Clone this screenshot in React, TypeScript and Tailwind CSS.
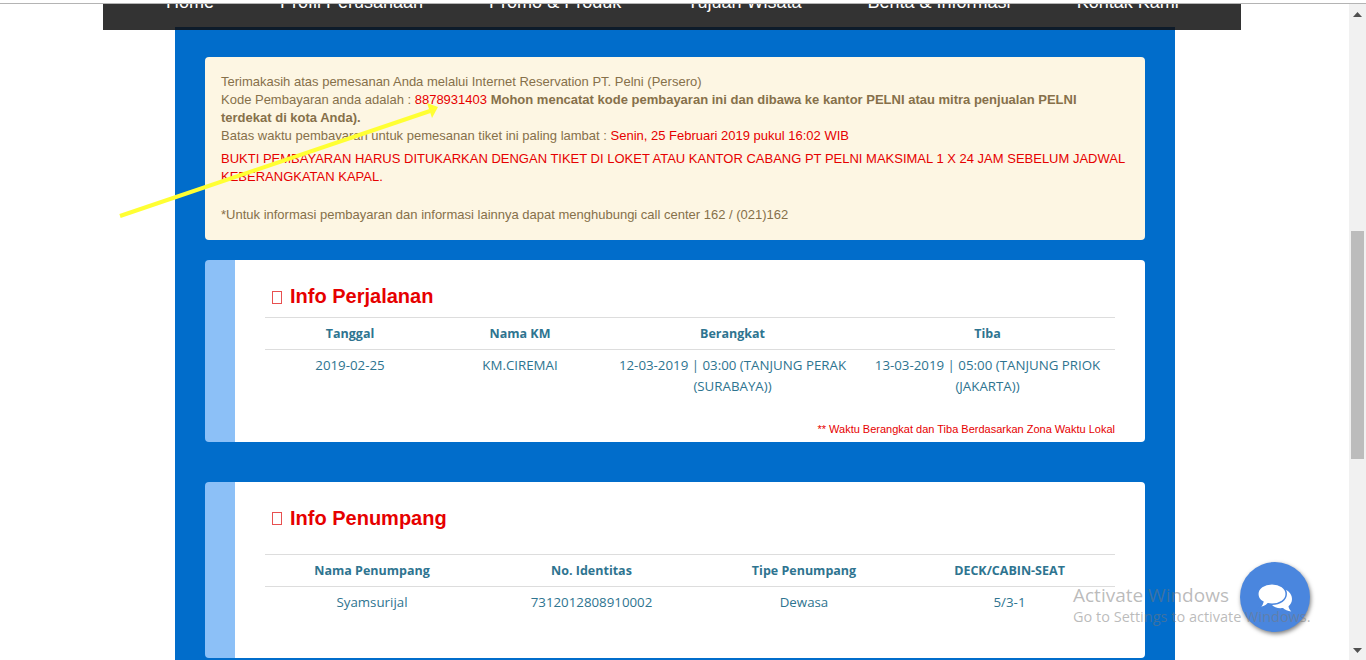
import React from "react";

const Head = ({ children }: { children: React.ReactNode }) => (
  <div className="text-center text-[12.5px] font-bold leading-[21px] text-[#2e7490]">{children}</div>
);
const Cell = ({ children, className = "" }: { children: React.ReactNode; className?: string }) => (
  <div className={`text-center text-[13.3px] leading-[21px] text-[#2e7490] ${className}`}>{children}</div>
);

export default function App() {
  const nav = ["Home", "Profil Perusahaan", "Promo & Produk", "Tujuan Wisata", "Berita & Informasi", "Kontak Kami"];
  return (
    <div className="relative h-[660px] w-[1366px] overflow-hidden bg-white font-['Liberation_Sans',Arial,sans-serif]">
      <div className="h-[3px]" />
      <div className="h-px bg-[#b4b4b4]" />
      <div className="w-[1349px]">
        <div className="ml-[103px] h-[26px] w-[1138px] overflow-hidden bg-[#333333]">
          <div className="mt-[-12px] flex gap-[66px] pl-[63px] text-[18px] leading-[20px] text-white">
            {nav.map((n) => <span key={n} className="whitespace-nowrap">{n}</span>)}
          </div>
        </div>
        <div className="mx-[175px] mt-[-3px] h-[633px] w-[1000px] border-t-[3px] border-[#0d1b2a] bg-[#016dcb] px-[30px] pt-[27px]">
          <div className="h-[183px] rounded-[4px] bg-[#fdf6e3] px-[16px] pt-[16px] text-[13px] leading-[18px] text-[#86704a]">
            <div>Terimakasih atas pemesanan Anda melalui Internet Reservation PT. Pelni (Persero)</div>
            <div>Kode Pembayaran anda adalah : <span className="text-[#e60000]">8878931403</span> <b>Mohon mencatat kode pembayaran ini dan dibawa ke kantor PELNI atau mitra penjualan PELNI terdekat di kota Anda).</b></div>
            <div>Batas waktu pembayaran untuk pemesanan tiket ini paling lambat : <span className="text-[#e60000]">Senin, 25 Februari 2019 pukul 16:02 WIB</span></div>
            <div className="mt-[5px] text-[#e60000]">BUKTI PEMBAYARAN HARUS DITUKARKAN DENGAN TIKET DI LOKET ATAU KANTOR CABANG PT PELNI MAKSIMAL 1 X 24 JAM SEBELUM JADWAL KEBERANGKATAN KAPAL.</div>
            <div className="mt-[20px]">*Untuk informasi pembayaran dan informasi lainnya dapat menghubungi call center 162 / (021)162</div>
          </div>

          <section className="mt-[20px] h-[182px] overflow-hidden rounded-[4px] border-l-[30px] border-[#8cc0f7] bg-white px-[30px]">
            <h2 className="flex h-[57px] items-end pb-[9px] pl-[7px] text-[20px] font-bold leading-[24px] text-[#e60000]">
              <span className="mr-[8px] mb-[4px] inline-block h-[13px] w-[10px] border border-[#e85050]" />Info Perjalanan
            </h2>
            <div className="font-['Open_Sans',sans-serif]">
              <div className="grid h-[33px] grid-cols-[170px_170px_255px_255px] items-center border-y border-[#dddddd]">
                <Head>Tanggal</Head><Head>Nama KM</Head><Head>Berangkat</Head><Head>Tiba</Head>
              </div>
              <div className="grid grid-cols-[170px_170px_255px_255px] pt-[5px]">
                <Cell>2019-02-25</Cell><Cell>KM.CIREMAI</Cell>
                <Cell className="px-[10px]">12-03-2019 | 03:00 (TANJUNG PERAK (SURABAYA))</Cell>
                <Cell className="px-[10px]">13-03-2019 | 05:00 (TANJUNG PRIOK (JAKARTA))</Cell>
              </div>
            </div>
            <div className="mt-[25px] text-right text-[11px] leading-[14px] text-[#e60000]">** Waktu Berangkat dan Tiba Berdasarkan Zona Waktu Lokal</div>
          </section>

          <section className="mt-[40px] h-[176px] overflow-hidden rounded-[4px] border-l-[30px] border-[#8cc0f7] bg-white px-[30px]">
            <h2 className="flex h-[72px] items-start pt-[24px] pl-[7px] text-[20px] font-bold leading-[24px] text-[#e60000]">
              <span className="mr-[8px] mt-[6px] inline-block h-[13px] w-[10px] border border-[#e85050]" />Info Penumpang
            </h2>
            <div className="font-['Open_Sans',sans-serif]">
              <div className="grid h-[33px] grid-cols-[214px_225px_200px_211px] items-center border-y border-[#dddddd]">
                <Head>Nama Penumpang</Head><Head>No. Identitas</Head><Head>Tipe Penumpang</Head><Head>DECK/CABIN-SEAT</Head>
              </div>
              <div className="grid grid-cols-[214px_225px_200px_211px] pt-[5px]">
                <Cell>Syamsurijal</Cell><Cell>7312012808910002</Cell><Cell>Dewasa</Cell><Cell>5/3-1</Cell>
              </div>
            </div>
          </section>
        </div>
      </div>

      {/* annotation arrow */}
      <svg className="absolute left-0 top-0" width="1366" height="660">
        <line x1="120" y1="216" x2="430" y2="111" stroke="#ffff33" strokeWidth="4" />
        <polygon points="438,107 427,103 432,118" fill="#ffff33" />
      </svg>

      {/* browser scrollbar */}
      <div className="absolute right-0 top-[4px] h-[656px] w-[17px] bg-[#f1f1f1]">
        <svg className="absolute left-[4px] top-[8px]" width="9" height="6"><polygon points="4.5,0 9,5 0,5" fill="#505050" /></svg>
        <div className="absolute left-[2px] top-[227px] h-[228px] w-[13px] bg-[#bcbcbc]" />
        <svg className="absolute left-[4px] bottom-[6px]" width="9" height="6"><polygon points="0,0 9,0 4.5,5" fill="#505050" /></svg>
      </div>

      {/* chat bubble */}
      <div className="absolute left-[1240px] top-[562px] flex h-[70px] w-[70px] items-center justify-center rounded-full bg-[#4a86de] shadow-[1px_2px_4px_rgba(0,0,0,0.5)]">
        <svg width="36" height="30" viewBox="0 0 36 30" fill="white" className="mt-[1px]">
          <path d="M24 6c6 0 11 4 11 10 0 3-1.300 5.500-3.500 7.300.3 2 1.200 3.800 2.800 5.200-3.500-.3-6.500-1.700-8.300-3.500-5 .5-9-.5-11-3z" />
          <path
            d="M15 .8c8 0 14.200 4.300 14.200 10.200S23 21.200 15 21.200c-1.500 0-2.800-.1-4-.4-2 2.300-5 3.700-8.500 3.900 1.800-1.700 3.100-3.700 3.400-5.700C2.500 17.500.8 14.500.8 11 .8 5.100 7 .8 15 .8z"
            stroke="#4a86de"
            strokeWidth="1.500"
          />
        </svg>
      </div>

      {/* activation watermark */}
      <div className="absolute left-[1073px] top-[583px] font-['Open_Sans',sans-serif] text-[rgba(120,120,120,0.5)]">
        <div className="text-[19px] leading-[24px] whitespace-nowrap">Activate Windows</div>
        <div className="text-[14.5px] leading-[20px] whitespace-nowrap">Go to Settings to activate Windows.</div>
      </div>
    </div>
  );
}
